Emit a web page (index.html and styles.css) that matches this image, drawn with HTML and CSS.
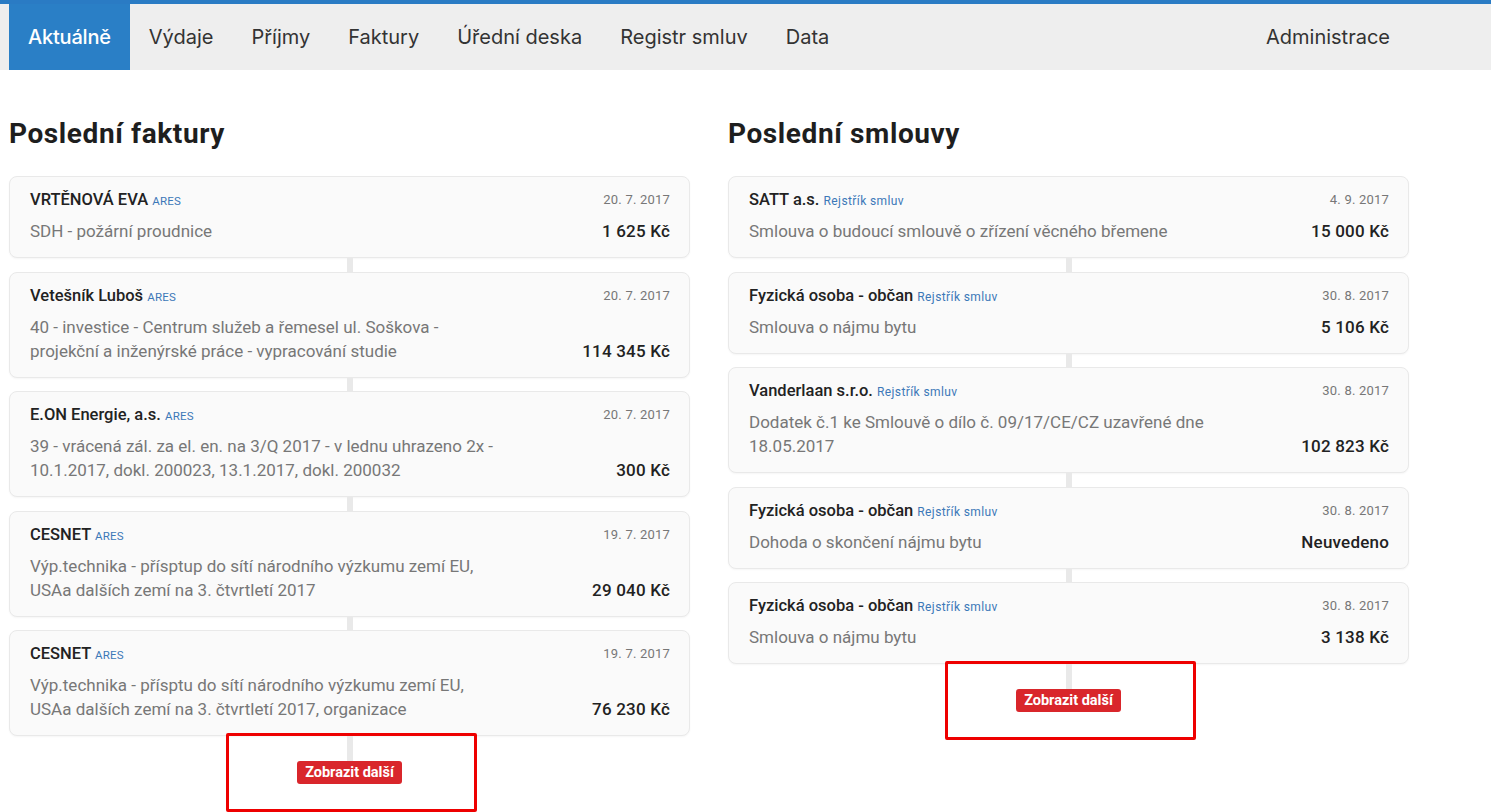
FILE: index.html
```html
<!DOCTYPE html>
<html lang="cs">
<head>
<meta charset="utf-8">
<title>Aktuálně</title>
<link rel="stylesheet" href="styles.css">
</head>
<body>
<div class="topline"></div>
<nav class="nav">
  <div class="nav-inner">
    <ul class="menu">
      <li class="active">Aktuálně</li>
      <li>Výdaje</li>
      <li>Příjmy</li>
      <li>Faktury</li>
      <li>Úřední deska</li>
      <li>Registr smluv</li>
      <li>Data</li>
    </ul>
    <ul class="menu">
      <li>Administrace</li>
    </ul>
  </div>
</nav>
<main class="columns">
  <section class="col">
    <h2>Poslední faktury</h2>
    <div class="list">
      <div class="card">
        <div class="row1"><span class="name">VRTĚNOVÁ EVA <a class="tag">ARES</a></span><span class="date">20. 7. 2017</span></div>
        <div class="row2"><span class="desc">SDH - požární proudnice</span><span class="amount">1 625 Kč</span></div>
      </div>
      <div class="conn"></div>
      <div class="card">
        <div class="row1"><span class="name">Vetešník Luboš <a class="tag">ARES</a></span><span class="date">20. 7. 2017</span></div>
        <div class="row2"><span class="desc">40 - investice - Centrum služeb a řemesel ul. Soškova - projekční a inženýrské práce - vypracování studie</span><span class="amount">114 345 Kč</span></div>
      </div>
      <div class="conn"></div>
      <div class="card">
        <div class="row1"><span class="name">E.ON Energie, a.s. <a class="tag">ARES</a></span><span class="date">20. 7. 2017</span></div>
        <div class="row2"><span class="desc">39 - vrácená zál. za el. en. na 3/Q 2017 - v lednu uhrazeno 2x - 10.1.2017, dokl. 200023, 13.1.2017, dokl. 200032</span><span class="amount">300 Kč</span></div>
      </div>
      <div class="conn"></div>
      <div class="card">
        <div class="row1"><span class="name">CESNET <a class="tag">ARES</a></span><span class="date">19. 7. 2017</span></div>
        <div class="row2"><span class="desc">Výp.technika - přísptup do sítí národního výzkumu zemí EU, USAa dalších zemí na 3. čtvrtletí 2017</span><span class="amount">29 040 Kč</span></div>
      </div>
      <div class="conn"></div>
      <div class="card">
        <div class="row1"><span class="name">CESNET <a class="tag">ARES</a></span><span class="date">19. 7. 2017</span></div>
        <div class="row2"><span class="desc">Výp.technika - přísptu do sítí národního výzkumu zemí EU, USAa dalších zemí na 3. čtvrtletí 2017, organizace</span><span class="amount">76 230 Kč</span></div>
      </div>
      <div class="more">
        <div class="conn tall"></div>
        <button class="btn">Zobrazit další</button>
        <div class="highlight hl-left"></div>
      </div>
    </div>
  </section>
  <section class="col">
    <h2>Poslední smlouvy</h2>
    <div class="list">
      <div class="card">
        <div class="row1"><span class="name">SATT a.s. <a class="tag reg">Rejstřík smluv</a></span><span class="date">4. 9. 2017</span></div>
        <div class="row2"><span class="desc">Smlouva o budoucí smlouvě o zřízení věcného břemene</span><span class="amount">15 000 Kč</span></div>
      </div>
      <div class="conn"></div>
      <div class="card">
        <div class="row1"><span class="name">Fyzická osoba - občan <a class="tag reg">Rejstřík smluv</a></span><span class="date">30. 8. 2017</span></div>
        <div class="row2"><span class="desc">Smlouva o nájmu bytu</span><span class="amount">5 106 Kč</span></div>
      </div>
      <div class="conn"></div>
      <div class="card">
        <div class="row1"><span class="name">Vanderlaan s.r.o. <a class="tag reg">Rejstřík smluv</a></span><span class="date">30. 8. 2017</span></div>
        <div class="row2"><span class="desc">Dodatek č.1 ke Smlouvě o dílo č. 09/17/CE/CZ uzavřené dne 18.05.2017</span><span class="amount">102 823 Kč</span></div>
      </div>
      <div class="conn"></div>
      <div class="card">
        <div class="row1"><span class="name">Fyzická osoba - občan <a class="tag reg">Rejstřík smluv</a></span><span class="date">30. 8. 2017</span></div>
        <div class="row2"><span class="desc">Dohoda o skončení nájmu bytu</span><span class="amount">Neuvedeno</span></div>
      </div>
      <div class="conn"></div>
      <div class="card">
        <div class="row1"><span class="name">Fyzická osoba - občan <a class="tag reg">Rejstřík smluv</a></span><span class="date">30. 8. 2017</span></div>
        <div class="row2"><span class="desc">Smlouva o nájmu bytu</span><span class="amount">3 138 Kč</span></div>
      </div>
      <div class="more">
        <div class="conn tall"></div>
        <button class="btn">Zobrazit další</button>
        <div class="highlight hl-right"></div>
      </div>
    </div>
  </section>
</main>
</body>
</html>
```
FILE: styles.css
```css
* { box-sizing: border-box; }
html, body { margin: 0; padding: 0; background: #fff; }
body {
  font-family: Roboto, "Noto Sans", "Liberation Sans", sans-serif;
  color: #222;
  overflow: hidden;
  height: 812px;
}
.topline { height: 4px; background: #2a7bc4; }
.nav { background: #eeeeee; height: 66px; }
.nav-inner {
  width: 1400px;
  margin-left: 9px;
  display: flex;
  justify-content: space-between;
  height: 100%;
}
.menu { list-style: none; margin: 0; padding: 0; display: flex; }
.menu li {
  padding: 0 19px;
  display: flex;
  align-items: center;
  font-family: Inter, Roboto, sans-serif;
  font-size: 20px;
  letter-spacing: 0;
  color: #333;
  height: 100%;
}
.menu li.active { background: #2a7fc6; color: #fff; font-weight: 500; letter-spacing: -0.2px; }

.columns {
  width: 1400px;
  margin-left: 9px;
  display: grid;
  grid-template-columns: 681px 681px;
  column-gap: 38px;
}
h2 {
  font-size: 28px;
  font-weight: 700;
  margin: 46px 0 24px;
  line-height: 36px;
  color: #1e1e1e;
  letter-spacing: 0.6px;
}
.list { display: flex; flex-direction: column; align-items: stretch; }
.card {
  background: #fafafa;
  border: 1px solid #e9e9e9;
  border-radius: 8px;
  box-shadow: 0 1px 2px rgba(0,0,0,0.04);
  padding: 11px 19px 14px 20px;
}
.row1 { display: flex; justify-content: space-between; align-items: center; height: 23px; }
.name { font-size: 16.5px; font-weight: 500; color: #222; letter-spacing: 0; }
.tag { font-size: 11.5px; font-weight: 400; color: #3c78b8; text-transform: uppercase; letter-spacing: 0.2px; }
.tag.reg { text-transform: none; font-size: 12px; letter-spacing: 0.4px; }
.date { font-size: 13px; color: #777; letter-spacing: 0.2px; }
.row2 { display: flex; justify-content: space-between; align-items: flex-end; margin-top: 8px; }
.desc { font-size: 17px; line-height: 24px; color: #777; max-width: 472px; letter-spacing: 0; }
.amount { font-size: 17px; line-height: 24px; font-weight: 500; color: #222; letter-spacing: 0.2px; }
.conn { width: 6px; height: 13.5px; background: #e9e9e9; align-self: center; }
.more { position: relative; display: flex; flex-direction: column; align-items: center; }
.conn.tall { height: 25px; }
.btn {
  border: none;
  background: #d9262b;
  color: #fff;
  font-family: Roboto, sans-serif;
  font-weight: 700;
  font-size: 14.5px;
  padding: 0 8px;
  height: 23px;
  border-radius: 3px;
  letter-spacing: 0;
}
.highlight {
  position: absolute;
  border: 3px solid #ee0000;
  border-radius: 2px;
  width: 251px;
  height: 79px;
  top: -3px;
}
.hl-left { left: 217px; }
.hl-right { left: 217px; }
```
